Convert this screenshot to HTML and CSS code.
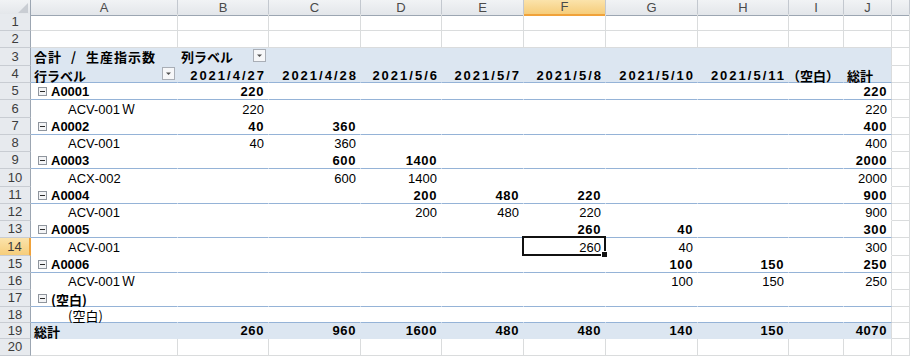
FILE: index.html
```html
<!DOCTYPE html>
<html lang="ja">
<head>
	<meta charset="UTF-8">
	<title>ピボットテーブル</title>
	<link rel="stylesheet" href="styles.css">
</head>
<body>
	<div class="sheet">
		<div class="row top">
			<div class="corner"><svg width="10" height="10" viewBox="0 0 10 10"><path d="M10 0v10H0z" fill="#c9cdd3"/></svg></div>
			<div>A</div><div>B</div><div>C</div><div>D</div><div>E</div>
			<div class="hi">F</div><div>G</div><div>H</div><div>I</div><div>J</div><div></div>
		</div>

		<div class="row">
			<div class="rh">1</div>
			<div></div><div></div><div></div><div></div><div></div><div></div><div></div><div></div><div></div><div></div><div></div>
		</div>
		<div class="row">
			<div class="rh">2</div>
			<div></div><div></div><div></div><div></div><div></div><div></div><div></div><div></div><div></div><div></div><div></div>
		</div>

		<div class="row hd">
			<div class="rh">3</div>
			<div class="p"><span class="ttl">合計 / 生産指示数</span></div>
			<div class="p"><span class="jp">列ラベル</span>
				<svg class="dd" width="13" height="13" viewBox="0 0 13 13"><rect x=".5" y=".5" width="12" height="12" fill="#f6f7f9" stroke="#a9aeb6"/><path d="M4 5.5h5l-2.5 2.5z" fill="#505050"/></svg>
			</div>
			<div class="p"></div><div class="p"></div><div class="p"></div><div class="p"></div><div class="p"></div><div class="p"></div><div class="p"></div><div class="p"></div>
			<div></div>
		</div>
		<div class="row hd ln">
			<div class="rh">4</div>
			<div class="p"><span class="jp">行ラベル</span>
				<svg class="dd" width="13" height="13" viewBox="0 0 13 13"><rect x=".5" y=".5" width="12" height="12" fill="#f6f7f9" stroke="#a9aeb6"/><path d="M4 5.5h5l-2.5 2.5z" fill="#505050"/></svg>
			</div>
			<div class="p n dt">2021/4/27</div>
			<div class="p n dt">2021/4/28</div>
			<div class="p n dt">2021/5/6</div>
			<div class="p n dt">2021/5/7</div>
			<div class="p n dt">2021/5/8</div>
			<div class="p n dt">2021/5/10</div>
			<div class="p n dt">2021/5/11</div>
			<div class="p n"><span class="jp">（空白）</span></div>
			<div class="p"><span class="jp">総計</span></div>
			<div></div>
		</div>

		<div class="row b ln">
			<div class="rh">5</div>
			<div class="p"><svg class="tg" width="9" height="9" viewBox="0 0 9 9"><rect x=".5" y=".5" width="8" height="8" fill="#f3f4f6" stroke="#8f959d"/><path d="M2 4.5h5" stroke="#2b2b2b"/></svg>A0001</div>
			<div class="p n">220</div><div class="p"></div><div class="p"></div><div class="p"></div><div class="p"></div><div class="p"></div><div class="p"></div><div class="p"></div>
			<div class="p n">220</div>
			<div></div>
		</div>
		<div class="row">
			<div class="rh">6</div>
			<div class="p ind"><span>ACV-001<span class="fw">Ｗ</span></span></div>
			<div class="p n">220</div><div class="p"></div><div class="p"></div><div class="p"></div><div class="p"></div><div class="p"></div><div class="p"></div><div class="p"></div>
			<div class="p n">220</div>
			<div></div>
		</div>

		<div class="row b ln">
			<div class="rh">7</div>
			<div class="p"><svg class="tg" width="9" height="9" viewBox="0 0 9 9"><rect x=".5" y=".5" width="8" height="8" fill="#f3f4f6" stroke="#8f959d"/><path d="M2 4.5h5" stroke="#2b2b2b"/></svg>A0002</div>
			<div class="p n">40</div><div class="p n">360</div><div class="p"></div><div class="p"></div><div class="p"></div><div class="p"></div><div class="p"></div><div class="p"></div>
			<div class="p n">400</div>
			<div></div>
		</div>
		<div class="row">
			<div class="rh">8</div>
			<div class="p ind">ACV-001</div>
			<div class="p n">40</div><div class="p n">360</div><div class="p"></div><div class="p"></div><div class="p"></div><div class="p"></div><div class="p"></div><div class="p"></div>
			<div class="p n">400</div>
			<div></div>
		</div>

		<div class="row b ln">
			<div class="rh">9</div>
			<div class="p"><svg class="tg" width="9" height="9" viewBox="0 0 9 9"><rect x=".5" y=".5" width="8" height="8" fill="#f3f4f6" stroke="#8f959d"/><path d="M2 4.5h5" stroke="#2b2b2b"/></svg>A0003</div>
			<div class="p"></div><div class="p n">600</div><div class="p n">1400</div><div class="p"></div><div class="p"></div><div class="p"></div><div class="p"></div><div class="p"></div>
			<div class="p n">2000</div>
			<div></div>
		</div>
		<div class="row">
			<div class="rh">10</div>
			<div class="p ind">ACX-002</div>
			<div class="p"></div><div class="p n">600</div><div class="p n">1400</div><div class="p"></div><div class="p"></div><div class="p"></div><div class="p"></div><div class="p"></div>
			<div class="p n">2000</div>
			<div></div>
		</div>

		<div class="row b ln">
			<div class="rh">11</div>
			<div class="p"><svg class="tg" width="9" height="9" viewBox="0 0 9 9"><rect x=".5" y=".5" width="8" height="8" fill="#f3f4f6" stroke="#8f959d"/><path d="M2 4.5h5" stroke="#2b2b2b"/></svg>A0004</div>
			<div class="p"></div><div class="p"></div><div class="p n">200</div><div class="p n">480</div><div class="p n">220</div><div class="p"></div><div class="p"></div><div class="p"></div>
			<div class="p n">900</div>
			<div></div>
		</div>
		<div class="row">
			<div class="rh">12</div>
			<div class="p ind">ACV-001</div>
			<div class="p"></div><div class="p"></div><div class="p n">200</div><div class="p n">480</div><div class="p n">220</div><div class="p"></div><div class="p"></div><div class="p"></div>
			<div class="p n">900</div>
			<div></div>
		</div>

		<div class="row b ln">
			<div class="rh">13</div>
			<div class="p"><svg class="tg" width="9" height="9" viewBox="0 0 9 9"><rect x=".5" y=".5" width="8" height="8" fill="#f3f4f6" stroke="#8f959d"/><path d="M2 4.5h5" stroke="#2b2b2b"/></svg>A0005</div>
			<div class="p"></div><div class="p"></div><div class="p"></div><div class="p"></div><div class="p n">260</div><div class="p n">40</div><div class="p"></div><div class="p"></div>
			<div class="p n">300</div>
			<div></div>
		</div>
		<div class="row">
			<div class="rh hi">14</div>
			<div class="p ind">ACV-001</div>
			<div class="p"></div><div class="p"></div><div class="p"></div><div class="p"></div><div class="p n sel">260</div><div class="p n">40</div><div class="p"></div><div class="p"></div>
			<div class="p n">300</div>
			<div></div>
		</div>

		<div class="row b ln">
			<div class="rh">15</div>
			<div class="p"><svg class="tg" width="9" height="9" viewBox="0 0 9 9"><rect x=".5" y=".5" width="8" height="8" fill="#f3f4f6" stroke="#8f959d"/><path d="M2 4.5h5" stroke="#2b2b2b"/></svg>A0006</div>
			<div class="p"></div><div class="p"></div><div class="p"></div><div class="p"></div><div class="p"></div><div class="p n">100</div><div class="p n">150</div><div class="p"></div>
			<div class="p n">250</div>
			<div></div>
		</div>
		<div class="row">
			<div class="rh">16</div>
			<div class="p ind"><span>ACV-001<span class="fw">Ｗ</span></span></div>
			<div class="p"></div><div class="p"></div><div class="p"></div><div class="p"></div><div class="p"></div><div class="p n">100</div><div class="p n">150</div><div class="p"></div>
			<div class="p n">250</div>
			<div></div>
		</div>

		<div class="row b ln">
			<div class="rh">17</div>
			<div class="p"><svg class="tg" width="9" height="9" viewBox="0 0 9 9"><rect x=".5" y=".5" width="8" height="8" fill="#f3f4f6" stroke="#8f959d"/><path d="M2 4.5h5" stroke="#2b2b2b"/></svg><span class="jp">(空白)</span></div>
			<div class="p"></div><div class="p"></div><div class="p"></div><div class="p"></div><div class="p"></div><div class="p"></div><div class="p"></div><div class="p"></div><div class="p"></div>
			<div></div>
		</div>
		<div class="row ln">
			<div class="rh">18</div>
			<div class="p ind"><span class="jp">(空白)</span></div>
			<div class="p"></div><div class="p"></div><div class="p"></div><div class="p"></div><div class="p"></div><div class="p"></div><div class="p"></div><div class="p"></div><div class="p"></div>
			<div></div>
		</div>

		<div class="row tt">
			<div class="rh">19</div>
			<div class="p"><span class="jp">総計</span></div>
			<div class="p n">260</div><div class="p n">960</div><div class="p n">1600</div><div class="p n">480</div><div class="p n">480</div><div class="p n">140</div><div class="p n">150</div><div class="p"></div>
			<div class="p n">4070</div>
			<div></div>
		</div>

		<div class="row">
			<div class="rh">20</div>
			<div></div><div></div><div></div><div></div><div></div><div></div><div></div><div></div><div></div><div></div><div></div>
		</div>
	</div>
</body>
</html>
```
FILE: styles.css
```css
*{
	margin:0;
	padding:0;
	box-sizing:border-box;
}
body{
	background:#fff;
	color:#000;
	font:13px "Liberation Sans","Noto Sans CJK JP",sans-serif;
}
.jp{
	font-family:"Noto Sans CJK JP",sans-serif;
	line-height:12px;
}
.fw{
	margin-left:2px;
	font-family:"Noto Sans CJK JP",sans-serif;
}
.sheet{
	display:grid;
	grid-template-rows:14px 17px 17px 18px 17px 17px 18px 17px 17px 17px 18px 17px 17px 17px 18px 17px 17px 17px 16px 16px 17px 17px;
	height:357px;
	overflow:hidden;
}
.row{
	display:grid;
	grid-template-columns:31px 147px 91px 92px 81px 82px 82px 92px 91px 55px 48px 1fr;
}
.row > div{
	display:flex;
	align-items:flex-end;
	white-space:nowrap;
	line-height:14px;
	padding:0 4px 0 3px;
	border-right:1px solid #dadcdd;
	border-bottom:1px solid #dadcdd;
}

/* column / row headers */
.top > div{
	justify-content:center;
	align-items:center;
	padding:0;
	color:#4a4a4a;
	background:linear-gradient(#f1f3f5,#e3e6ea);
	border-right-color:#c3c8cf;
	border-bottom-color:#9ca6b2;
}
.top > .corner{
	justify-content:flex-end;
	align-items:flex-end;
	padding:0 2px 2px 0;
	border-right-color:#9ca6b2;
}
.row > .rh{
	justify-content:center;
	align-items:center;
	padding:0;
	color:#3c3c3c;
	background:#e7eaee;
	border-right-color:#9ca6b2;
	border-bottom-color:#c8ccd2;
}
.top > .hi{
	background:linear-gradient(#fbe3ab,#f6cd7b);
	border-bottom:2px solid #f0a23a;
}
.row > .rh.hi{
	background:linear-gradient(#fbe3ab,#f6cd7b);
	border-right:2px solid #f0a23a;
}

/* pivot area */
.row > .p{
	border-color:transparent;
	background:#fff;
}
.row > .p:nth-child(11){
	border-right-color:#dadcdd;
}
.ln > .p{
	border-bottom-color:#95b3d7;
}
.hd > .p,
.tt > .p{
	background:#dce6f1;
	font-weight:bold;
}
.hd:not(.ln) > .p{
	padding-bottom:2px;
}
.hd.ln > .p{
	line-height:12px;
}
.b > .p{
	font-weight:bold;
}
.row > .n{
	justify-content:flex-end;
}
.b > .n,
.tt > .n{
	letter-spacing:.6px;
}
.row > .dt{
	letter-spacing:2px;
	padding-right:2px;
}
.row > .ind{
	padding-left:37px;
}
.ttl{
	font-family:"Noto Sans CJK JP",sans-serif;
	line-height:12px;
	letter-spacing:1px;
	word-spacing:5px;
}
.dd{
	margin:0 -2px 1px auto;
	align-self:center;
	flex-shrink:0;
}
.tg{
	margin:0 4px 3px 4px;
	flex-shrink:0;
}

/* active cell */
.sel{
	position:relative;
	z-index:1;
}
.sel::before{
	content:"";
	position:absolute;
	left:-2px;
	top:-2px;
	right:-1px;
	bottom:-1px;
	border:2px solid #111;
}
.sel::after{
	content:"";
	position:absolute;
	right:-3px;
	bottom:-3px;
	width:5px;
	height:5px;
	background:#111;
	border:1px solid #fff;
}
```
